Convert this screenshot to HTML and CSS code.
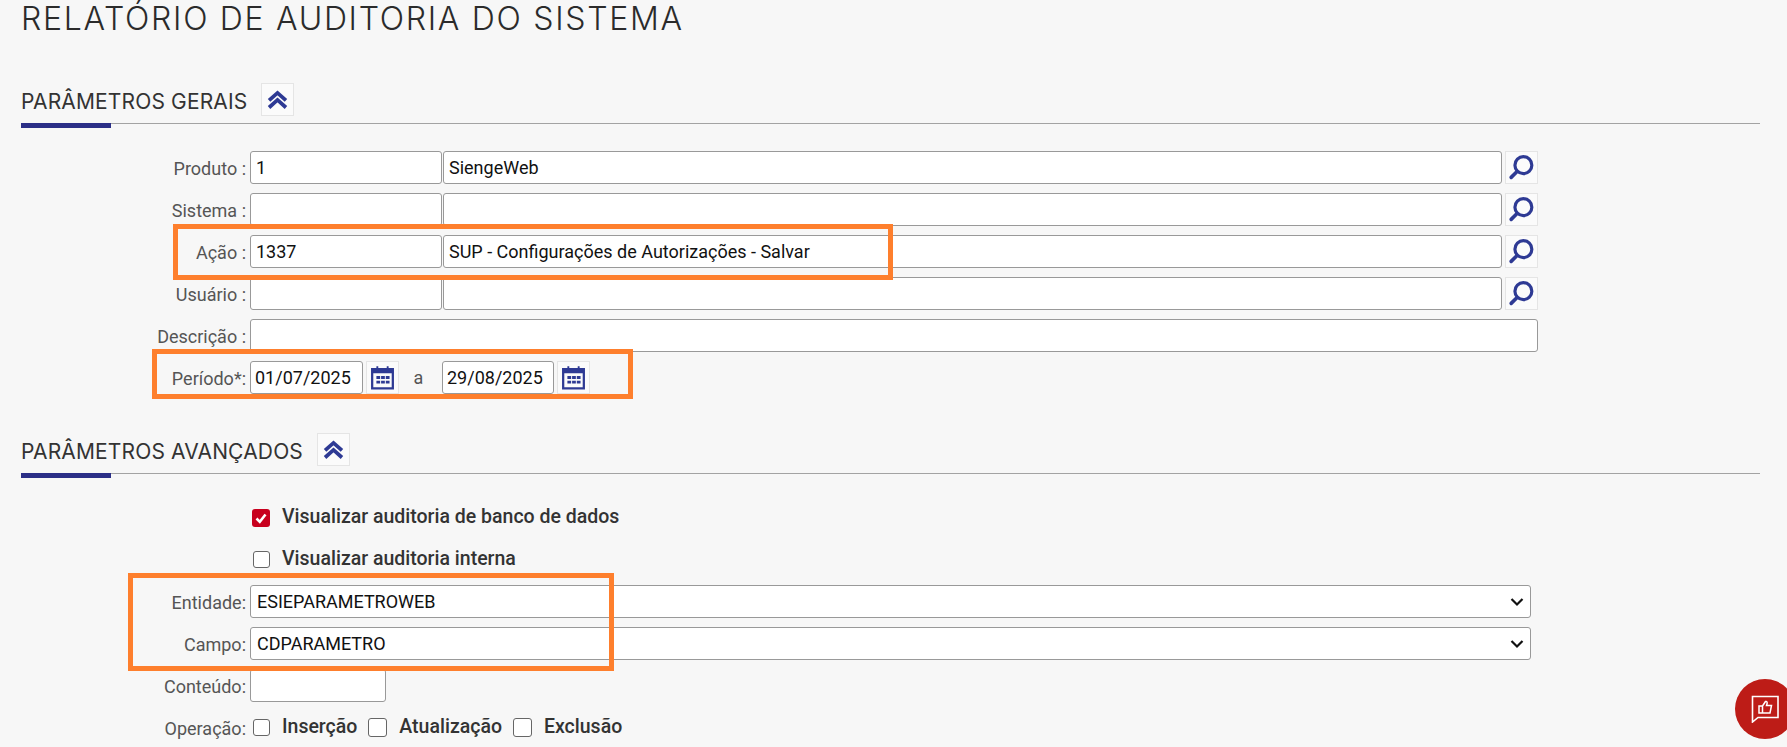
FILE: index.html
```html
<!DOCTYPE html>
<html lang="pt-BR">
<head>
    <meta charset="UTF-8" />
    <title>Relatório de Auditoria do Sistema</title>
    <link rel="stylesheet" href="styles.css">
</head>
<body>
    <svg width="0" height="0" class="defs">
        <symbol id="ico-up" viewBox="0 0 33 33">
            <path d="M7.500 17.500 16.500 9.500 25.500 17.500M7.500 25 16.500 17 25.500 25" fill="none" stroke="#2e3a94" stroke-width="4"/>
        </symbol>
        <symbol id="ico-search" viewBox="0 0 33 33">
            <circle cx="18.500" cy="14" r="9" fill="none" stroke="#2e3a94" stroke-width="3.400"/>
            <path d="M11.500 21 5.500 27" fill="none" stroke="#2e3a94" stroke-width="3.800" stroke-linecap="round"/>
        </symbol>
        <symbol id="ico-cal" viewBox="0 0 33 33">
            <path d="M5.500 7.500H27.500V28H5.500Z" fill="none" stroke="#2e3a94" stroke-width="2.400"/>
            <path d="M5 6.500H28V12H5ZM10 4.500H12V8H10ZM21 4.500H23V8H21Z" fill="#2e3a94"/>
            <path d="M10 15H14V18H10ZM15 15H19V18H15ZM20 15H24V18H20ZM10 20H14V23H10ZM15 20H19V23H15ZM20 20H24V23H20Z" fill="#2e3a94"/>
        </symbol>
    </svg>

    <h1 class="page-title">RELATÓRIO DE AUDITORIA DO SISTEMA</h1>

    <section class="secao secao-gerais">
        <div class="secao-header">
            <h2>PARÂMETROS GERAIS</h2>
            <button class="icon-btn" type="button"><svg><use href="#ico-up"/></svg></button>
        </div>
        <div class="campos">
            <div class="linha">
                <label>Produto :</label>
                <input class="input input-cod" type="text" value="1" />
                <input class="input input-desc" type="text" value="SiengeWeb" />
                <button class="icon-btn" type="button"><svg><use href="#ico-search"/></svg></button>
            </div>
            <div class="linha">
                <label>Sistema :</label>
                <input class="input input-cod" type="text" />
                <input class="input input-desc" type="text" />
                <button class="icon-btn" type="button"><svg><use href="#ico-search"/></svg></button>
            </div>
            <div class="linha">
                <label>Ação :</label>
                <input class="input input-cod" type="text" value="1337" />
                <input class="input input-desc" type="text" value="SUP - Configurações de Autorizações - Salvar" />
                <button class="icon-btn" type="button"><svg><use href="#ico-search"/></svg></button>
            </div>
            <div class="linha">
                <label>Usuário :</label>
                <input class="input input-cod" type="text" />
                <input class="input input-desc" type="text" />
                <button class="icon-btn" type="button"><svg><use href="#ico-search"/></svg></button>
            </div>
            <div class="linha">
                <label>Descrição :</label>
                <input class="input input-full" type="text" />
            </div>
            <div class="linha">
                <label>Período*:</label>
                <input class="input input-data" type="text" value="01/07/2025" />
                <button class="icon-btn btn-cal" type="button"><svg><use href="#ico-cal"/></svg></button>
                <span class="ate">a</span>
                <input class="input input-data input-data-fim" type="text" value="29/08/2025" />
                <button class="icon-btn btn-cal" type="button"><svg><use href="#ico-cal"/></svg></button>
            </div>
        </div>
    </section>

    <section class="secao secao-avancados">
        <div class="secao-header">
            <h2>PARÂMETROS AVANÇADOS</h2>
            <button class="icon-btn" type="button"><svg><use href="#ico-up"/></svg></button>
        </div>
        <div class="campos">
            <div class="linha">
                <label></label>
                <span class="check check-on"><svg viewBox="0 0 18 18"><path d="M4.500 9.500 7.800 12.800 13.500 5.500" fill="none" stroke="#fff" stroke-width="2.600"/></svg></span>
                <span class="check-text">Visualizar auditoria de banco de dados</span>
            </div>
            <div class="linha">
                <label></label>
                <span class="check"></span>
                <span class="check-text">Visualizar auditoria interna</span>
            </div>
            <div class="linha">
                <label>Entidade:</label>
                <select class="select"><option>ESIEPARAMETROWEB</option></select>
            </div>
            <div class="linha">
                <label>Campo:</label>
                <select class="select"><option>CDPARAMETRO</option></select>
            </div>
            <div class="linha">
                <label>Conteúdo:</label>
                <input class="input input-conteudo" type="text" />
            </div>
            <div class="linha">
                <label>Operação:</label>
                <span class="check"></span>
                <span class="check-text op">Inserção</span>
                <span class="check check-op"></span>
                <span class="check-text op">Atualização</span>
                <span class="check check-op"></span>
                <span class="check-text op">Exclusão</span>
            </div>
        </div>
    </section>

    <div class="destaque destaque-acao"></div>
    <div class="destaque destaque-periodo"></div>
    <div class="destaque destaque-entidade"></div>

    <button class="fab" type="button">
        <svg viewBox="0 0 28 28" width="28" height="28">
            <path d="M1.500 1.500H27V22.500H7L1.500 27Z" fill="none" stroke="#fff" stroke-width="1.600"/>
            <path d="M8 11H11.500V18H8ZM11.500 11 14.500 6.500C16 6 16.500 7.500 16 9L15.500 10.500H20.500L19 18H11.500" fill="none" stroke="#fff" stroke-width="1.500"/>
        </svg>
    </button>
</body>
</html>
```

FILE: styles.css
```css
html, body {
    height: 100%;
    overflow: hidden;
}
body {
    margin: 0;
    padding: 0 27px 0 21px;
    background-color: #f7f7f7;
    font-family: Roboto, Arial, sans-serif;
    font-size: 18px;
    color: #333;
}
.defs {
    position: absolute;
}
.page-title {
    margin: 0;
    height: 81px;
    padding-top: 2px;
    font-family: Inter, Roboto, sans-serif;
    font-size: 32px;
    font-weight: 350;
    line-height: 34px;
    letter-spacing: 1.7px;
    color: #2b2b2b;
}
.secao-avancados {
    margin-top: 39px;
}
.secao-header {
    display: flex;
    align-items: center;
    gap: 14px;
    height: 40px;
    border-bottom: 1px solid #a3a3a3;
    position: relative;
}
.secao-header::after {
    content: "";
    position: absolute;
    left: 0;
    bottom: -5px;
    width: 90px;
    height: 5px;
    background-color: #2b2f87;
}
.secao-header h2 {
    margin: 0 0 4px;
    font-family: Inter, Roboto, sans-serif;
    font-size: 21px;
    font-weight: 400;
    letter-spacing: 0.15px;
    color: #333;
}
.secao-header .icon-btn {
    margin-bottom: 7px;
}
.campos {
    padding-top: 27px;
}
.linha {
    display: flex;
    align-items: center;
    height: 33px;
    margin-bottom: 9px;
}
.linha label {
    width: 225px;
    margin-right: 4px;
    text-align: right;
    color: #555;
    padding-top: 1px;
}
.input {
    box-sizing: border-box;
    height: 33px;
    padding: 0 5px;
    border: 1px solid #999;
    border-radius: 3px;
    background-color: #fff;
    font-family: Roboto, Arial, sans-serif;
    font-size: 18px;
    color: #111;
    outline: none;
}
.input-cod {
    width: 192px;
    margin-right: 1px;
}
.input-desc {
    width: 1059px;
    margin-right: 3px;
}
.input-full {
    width: 1288px;
}
.input-data {
    width: 113px;
    margin-right: 3px;
    padding: 0 4px;
}
.input-data-fim {
    width: 112px;
}
.input-conteudo {
    width: 136px;
}
.select {
    box-sizing: border-box;
    width: 1281px;
    height: 33px;
    border: 1px solid #999;
    border-radius: 3px;
    padding-left: 6px;
    font-family: Roboto, Arial, sans-serif;
    font-size: 18px;
    color: #111;
    appearance: none;
    background: #fff url("data:image/svg+xml,%3Csvg xmlns='http://www.w3.org/2000/svg' width='14' height='10'%3E%3Cpath d='M1.500 2 7 7.500 12.500 2' fill='none' stroke='%23111' stroke-width='2.200'/%3E%3C/svg%3E") no-repeat right 6px center;
}
.icon-btn {
    box-sizing: border-box;
    flex: none;
    display: block;
    width: 33px;
    height: 33px;
    padding: 0;
    border: 1px solid #e5e5e5;
    background-color: #fbfbfb;
}
.icon-btn svg {
    display: block;
    width: 31px;
    height: 31px;
}
.ate {
    box-sizing: border-box;
    width: 43px;
    padding-right: 4px;
    text-align: center;
    color: #555;
}
.check {
    box-sizing: border-box;
    flex: none;
    width: 17px;
    height: 17px;
    margin-left: 3px;
    border: 1px solid #666;
    border-radius: 3px;
    background-color: #fff;
}
.check-on {
    width: 18px;
    height: 18px;
    margin-left: 2px;
    border: none;
    background-color: #c8001e;
}
.check-on svg {
    display: block;
}
.check-op {
    width: 19px;
    height: 19px;
    margin-left: 11px;
}
.check-text {
    margin-left: 12px;
    margin-bottom: 3px;
    font-size: 19.5px;
    font-weight: 500;
    color: #333;
}
.destaque {
    position: absolute;
    box-sizing: border-box;
    border: 5px solid #fe7f2d;
}
.destaque-acao {
    left: 173px;
    top: 224px;
    width: 720px;
    height: 56px;
}
.destaque-periodo {
    left: 152px;
    top: 349px;
    width: 481px;
    height: 50px;
}
.destaque-entidade {
    left: 128px;
    top: 573px;
    width: 486px;
    height: 98px;
}
.fab {
    position: absolute;
    left: 1735px;
    top: 679px;
    width: 60px;
    height: 60px;
    padding: 0 0 0 3px;
    border: none;
    border-radius: 50%;
    background-color: #bd1c17;
    display: flex;
    align-items: center;
    justify-content: flex-start;
}
.fab svg {
    margin-left: 13px;
}
```
